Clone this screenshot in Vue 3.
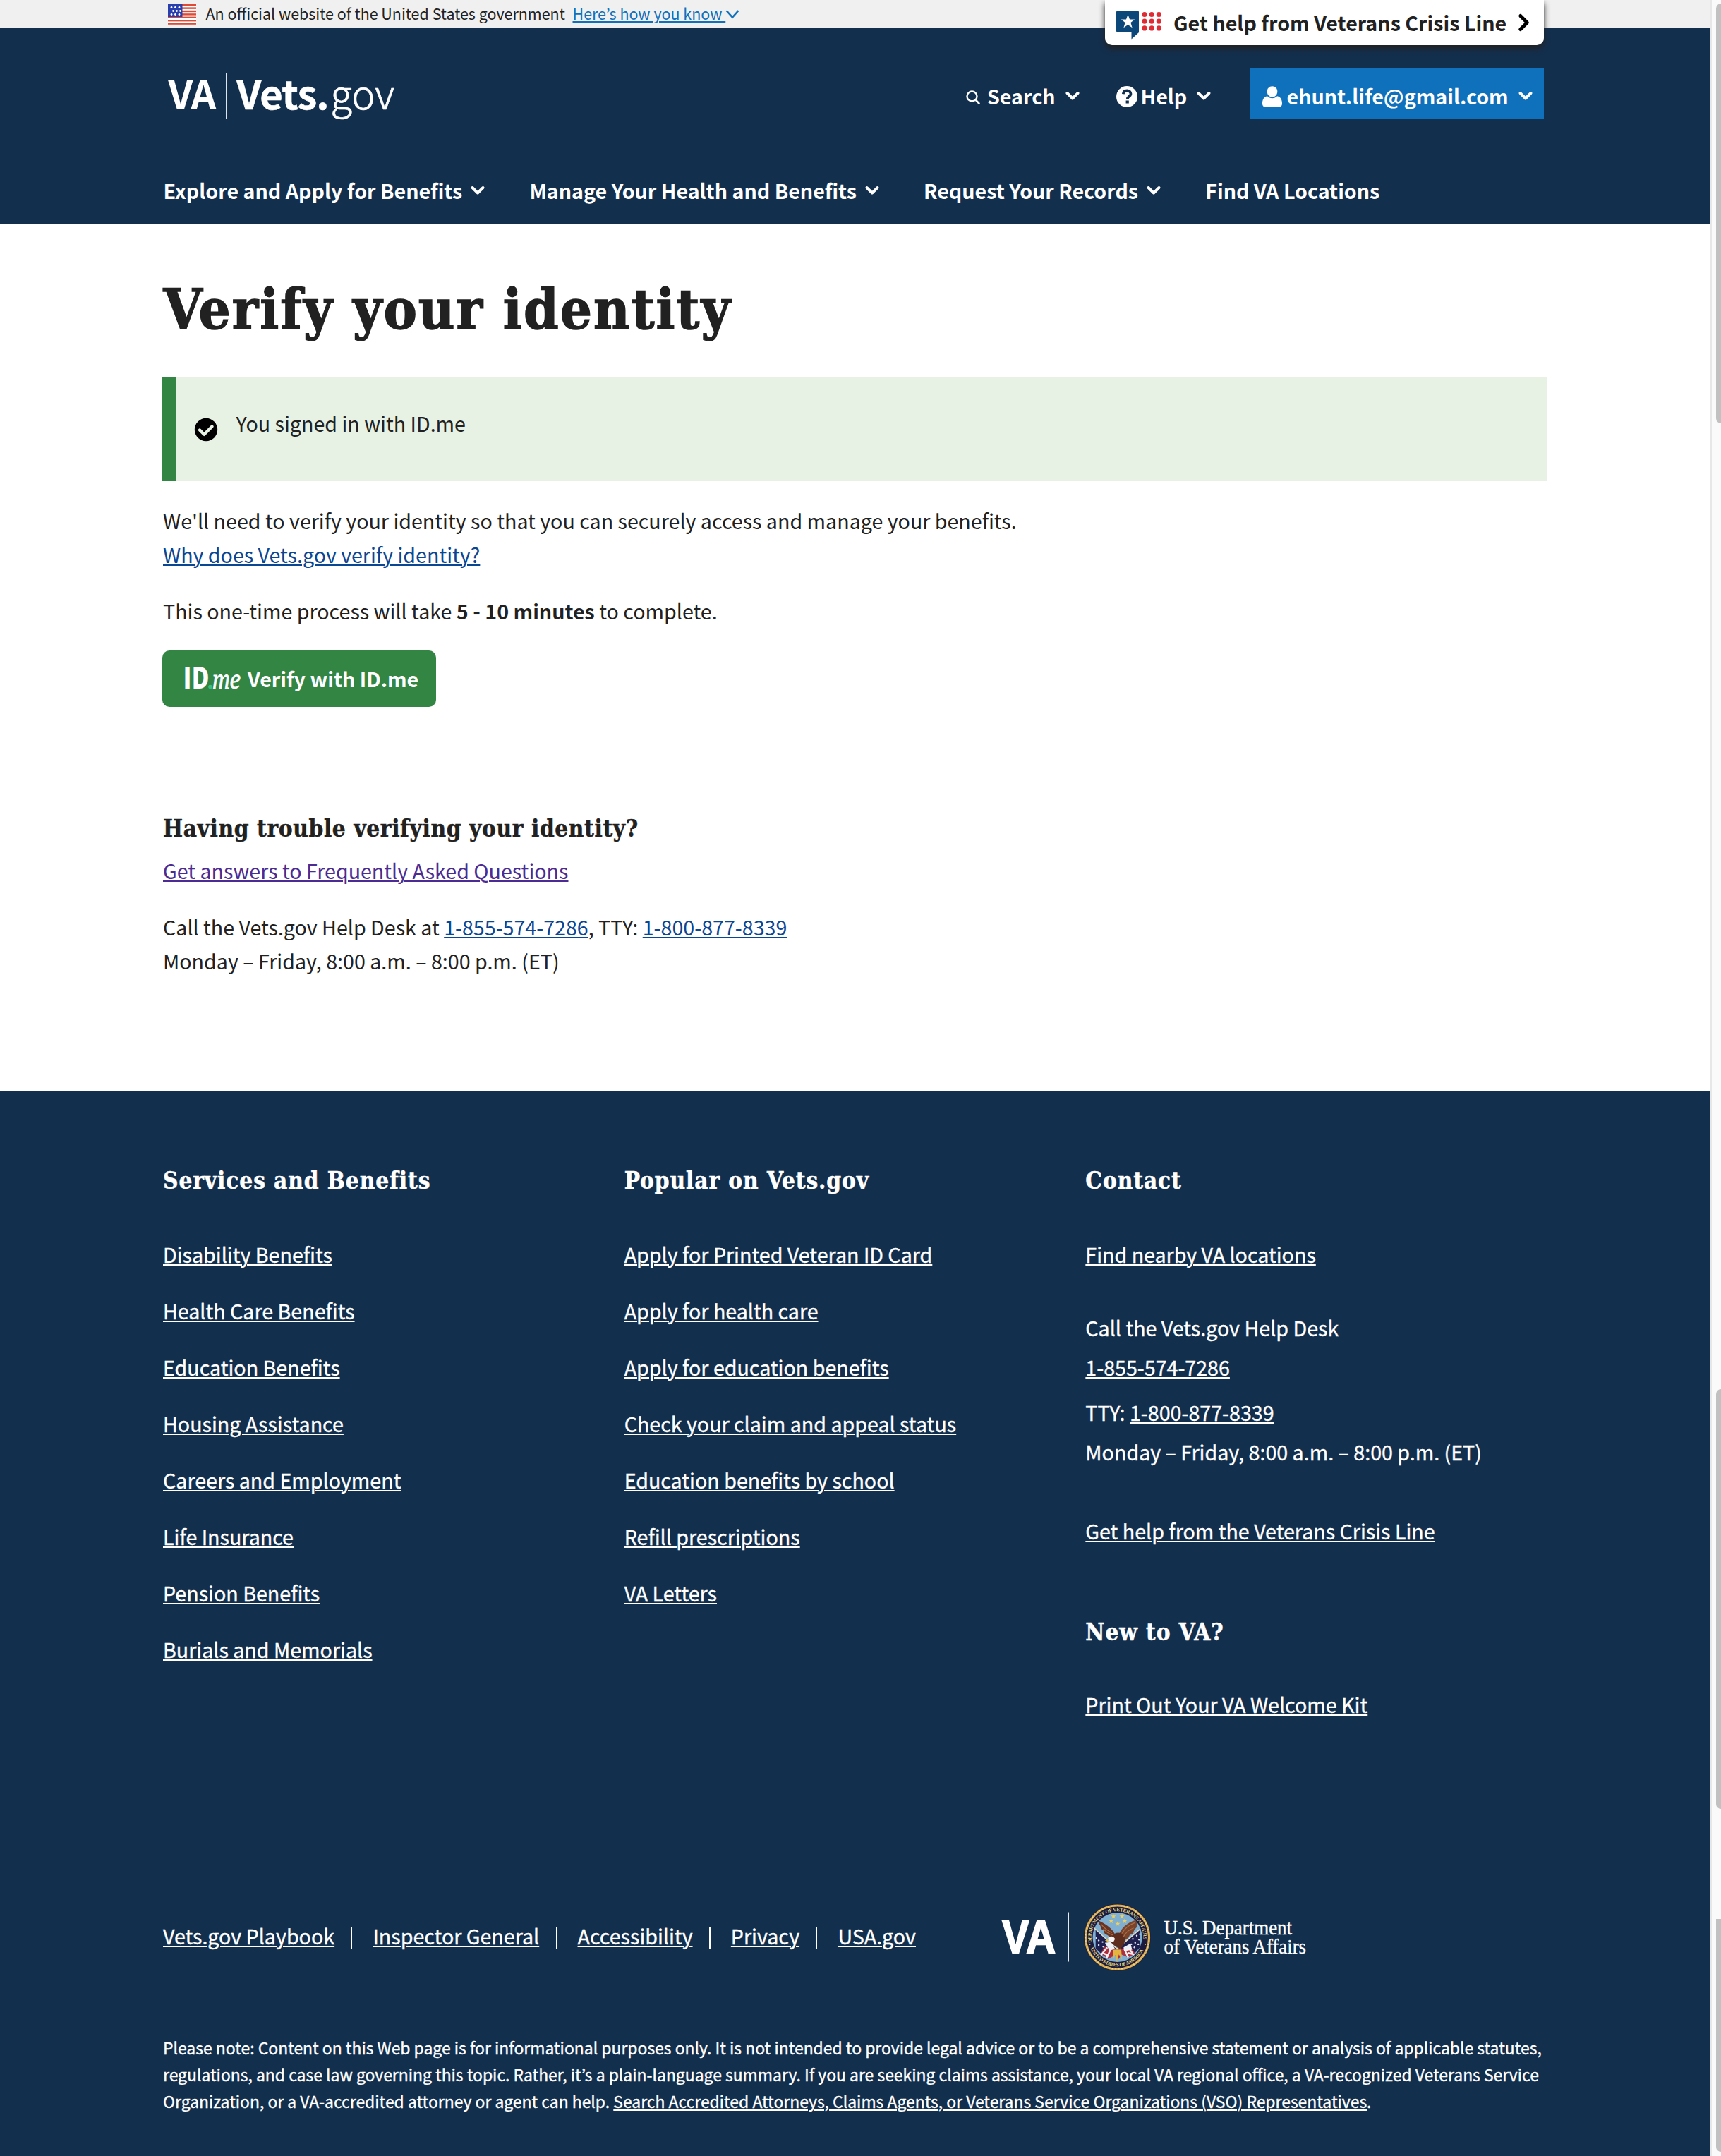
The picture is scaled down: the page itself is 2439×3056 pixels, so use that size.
<script setup>
const menu = [
  { label: 'Explore and Apply for Benefits', drop: true },
  { label: 'Manage Your Health and Benefits', drop: true },
  { label: 'Request Your Records', drop: true },
  { label: 'Find VA Locations', drop: false },
]
const services = [
  'Disability Benefits', 'Health Care Benefits', 'Education Benefits', 'Housing Assistance',
  'Careers and Employment', 'Life Insurance', 'Pension Benefits', 'Burials and Memorials',
]
const popular = [
  'Apply for Printed Veteran ID Card', 'Apply for health care', 'Apply for education benefits',
  'Check your claim and appeal status', 'Education benefits by school', 'Refill prescriptions', 'VA Letters',
]
const legal = ['Vets.gov Playbook', 'Inspector General', 'Accessibility', 'Privacy', 'USA.gov']
const dots = [0, 1, 2].flatMap((r) => [0, 1, 2].map((c) => ({ x: 40 + c * 10.2, y: 5.5 + r * 9.7 })))
const flagStars = [[5, 4.5], [10.5, 4.5], [16, 4.5], [7.5, 9.5], [12.5, 9.5], [17.5, 9.5], [5, 14.5], [10.5, 14.5], [16, 14.5]]
const sealStars = [[-6, -28], [5, -28], [-9, -22], [8.5, -22], [-0.5, -18.5]]
const speckles = [[20, 2], [25, -2], [28, 3], [23, 7], [18, 9], [27, 9], [15, 14], [22, 13], [29, -4], [-24, 4], [-19, 6], [-24, 10], [-18, 12], [-27, 1]]
</script>

<template>
  <div class="app">
    <div class="page">
      <div class="banner">
        <svg class="flag" width="40" height="29" viewBox="0 0 40 29">
          <rect width="40" height="29" fill="#fff" />
          <rect v-for="i in 7" :key="i" x="0" :y="(i - 1) * 4.4" width="40" height="2.4" fill="#dd4a35" />
          <rect width="20.5" height="18" fill="#2a3fae" />
          <circle v-for="(s, i) in flagStars" :key="'s' + i" :cx="s[0]" :cy="s[1]" r="1.4" fill="#fff" />
        </svg>
        <span class="official">An official website of the United States government</span>
        <a class="know">Here’s how you know&nbsp;</a>
        <svg class="know-chev" width="20" height="14" viewBox="0 0 20 14"><path d="M1.5 2l8.5 9.5L18.5 2" fill="none" stroke="#0f71bb" stroke-width="2.6" /></svg>
      </div>

      <div class="crisis">
        <svg width="66" height="42" viewBox="0 0 66 42">
          <path d="M2 0h28a2 2 0 0 1 2 2v29l-10.5 9.5V31H2a2 2 0 0 1-2-2V2a2 2 0 0 1 2-2z" fill="#0b4778" />
          <path d="M16.500 5.500l2.500 7h7.200l-5.800 4.500 2.200 7.300-6.100-4.400-6.100 4.400 2.200-7.300-5.800-4.500h7.200z" fill="#fff" />
          <circle v-for="(d, i) in dots" :key="i" :cx="d.x" :cy="d.y" r="3.6" fill="#df2b34" />
        </svg>
        <b>Get help from Veterans Crisis Line</b>
        <svg class="cr-chev" width="16" height="24" viewBox="0 0 16 24"><path d="M2.800 2.500l9.500 9.500-9.500 9.500" fill="none" stroke="#000" stroke-width="5" stroke-linecap="round" stroke-linejoin="round" /></svg>
      </div>

      <header>
        <div class="top">
          <div class="logo"><b class="va">VA</b><i class="bar"></i><b class="vets">Vets.</b><span>gov</span></div>
          <div class="tool search">
            <svg width="20" height="20" viewBox="0 0 20 20"><circle cx="8.500" cy="8.500" r="7" fill="none" stroke="#fff" stroke-width="2.400" /><path d="M13.500 13.500l5 5" stroke="#fff" stroke-width="2.600" stroke-linecap="round" /></svg>
            <b>Search</b>
            <svg class="chev" width="20" height="14" viewBox="0 0 20 14"><path d="M2.500 3l7.500 7.500L17.500 3" /></svg>
          </div>
          <div class="tool help">
            <svg width="30" height="30" viewBox="0 0 30 30"><circle cx="15" cy="15" r="15" fill="#fff" /><path d="M9.800 11.200C10.300 7.800 12.400 6.500 15.200 6.500c3 0 5.300 1.800 5.300 4.500 0 3.700-4.700 3.900-4.700 7.300" fill="none" stroke="#132f4e" stroke-width="3.800" /><rect x="13.600" y="20.500" width="4.200" height="4" fill="#132f4e" /></svg>
            <b>Help</b>
            <svg class="chev" width="20" height="14" viewBox="0 0 20 14"><path d="M2.500 3l7.500 7.500L17.500 3" /></svg>
          </div>
          <div class="tool user">
            <svg width="28" height="30" viewBox="0 0 28 30"><path d="M14 0.200c4.300 0 7.300 3.300 7.300 7.600S18.300 15.700 14 15.700 6.700 12.100 6.700 7.800 9.700 0.200 14 0.200z" fill="#fff" /><path d="M7 14.200c1.900 2 4.300 3 7 3s5.100-1 7-3c4.800 0.600 7 5 7 10.600 0 3.200-1.900 5-4.600 5H4.600C1.900 29.800 0 28 0 24.800c0-5.600 2.200-10 7-10.600z" fill="#fff" /></svg>
            <b>ehunt.life@gmail.com</b>
            <svg class="chev" width="20" height="14" viewBox="0 0 20 14"><path d="M2.500 3l7.500 7.500L17.500 3" /></svg>
          </div>
        </div>
        <nav>
          <div v-for="m in menu" :key="m.label" class="item">
            <b>{{ m.label }}</b>
            <svg v-if="m.drop" class="chev" width="20" height="14" viewBox="0 0 20 14"><path d="M2.500 3l7.500 7.500L17.500 3" /></svg>
          </div>
        </nav>
      </header>

      <main>
        <h1>Verify your identity</h1>
        <div class="alert">
          <svg width="32" height="32" viewBox="0 0 32 32"><circle cx="16" cy="16" r="16.200" fill="#000" /><path d="M7 16.500l6.300 6.300L24.500 11.500" fill="none" stroke="#e7f2e4" stroke-width="4.400" stroke-linecap="round" stroke-linejoin="round" /></svg>
          <span>You signed in with ID.me</span>
        </div>
        <p class="p1">We'll need to verify your identity so that you can securely access and manage your benefits.<br /><a>Why does Vets.gov verify identity?</a></p>
        <p class="p2">This one-time process will take <b>5 - 10 minutes</b> to complete.</p>
        <button>
          <svg width="84" height="36" viewBox="0 0 84 36">
            <text class="idm" x="-2.500" y="32" textLength="37" lengthAdjust="spacingAndGlyphs">ID</text>
            <circle cx="36" cy="29.500" r="2.800" fill="#35c17c" />
            <text class="me" x="39" y="32" textLength="40" lengthAdjust="spacingAndGlyphs">me</text>
          </svg>
          <b>Verify with ID.me</b>
        </button>
        <h3>Having trouble verifying your identity?</h3>
        <p class="faq"><a>Get answers to Frequently Asked Questions</a></p>
        <p class="p2">Call the Vets.gov Help Desk at <a>1-855-574-7286</a>, TTY: <a>1-800-877-8339</a><br />Monday – Friday, 8:00 a.m. – 8:00 p.m. (ET)</p>
      </main>

      <footer>
        <div class="cols">
          <section>
            <h3>Services and Benefits</h3>
            <ul><li v-for="s in services" :key="s"><a>{{ s }}</a></li></ul>
          </section>
          <section>
            <h3>Popular on Vets.gov</h3>
            <ul><li v-for="s in popular" :key="s"><a>{{ s }}</a></li></ul>
          </section>
          <section>
            <h3>Contact</h3>
            <ul><li><a>Find nearby VA locations</a></li></ul>
            <p class="call">Call the Vets.gov Help Desk<br /><a>1-855-574-7286</a></p>
            <p class="tty">TTY: <a>1-800-877-8339</a><br />Monday – Friday, 8:00 a.m. – 8:00 p.m. (ET)</p>
            <p class="gethelp"><a>Get help from the Veterans Crisis Line</a></p>
            <h3 class="new">New to VA?</h3>
            <p class="kit"><a>Print Out Your VA Welcome Kit</a></p>
          </section>
        </div>

        <div class="bottom">
          <div class="legal">
            <template v-for="(l, i) in legal" :key="l"><i v-if="i" class="sep"></i><a>{{ l }}</a></template>
          </div>
          <svg class="dept" width="416" height="100" viewBox="0 0 416 100">
            <text class="dva" x="0" y="72" textLength="76" lengthAdjust="spacingAndGlyphs">VA</text>
            <rect x="93.500" y="14.500" width="1.400" height="70" fill="#fff" />
            <g transform="translate(163.500 50)">
              <defs>
                <path id="arcTop" d="M-36 7.500A36.800 36.800 0 1 1 36 7.500" />
                <path id="arcLow" d="M-38.500 14.500A41.100 41.100 0 0 0 38.500 14.500" />
                <clipPath id="disc"><circle r="31.800" /></clipPath>
              </defs>
              <circle r="47.500" fill="#20203f" />
              <circle r="45" fill="none" stroke="#d9ab4e" stroke-width="3.200" />
              <circle r="45" fill="none" stroke="#f4dc8c" stroke-width="1.200" stroke-dasharray="2 2.500" />
              <circle r="43" fill="#1b1b40" />
              <g transform="scale(1.1)">
                <circle r="31.800" fill="#7fb0d2" />
                <g clip-path="url(#disc)">
                  <path d="M-28-10L-2 14l-6 10-11-1-9-9z" fill="#1e2050" />
                  <path d="M29-10L4 12l6 12 11-2 8-9z" fill="#1e2050" />
                  <path d="M-30-12L2 17M31-12L-2 16" stroke="#e4dcc4" stroke-width="1.400" />
                  <circle v-for="(s, i) in speckles" :key="i" :cx="s[0]" :cy="s[1]" r="1.100" fill="#dfe6f2" />
                  <path d="M-17 12l17 4 17-4 6 9-9 5-9-4-3 6-5-5-9 5-9-7z" fill="#b02f3e" />
                  <path d="M-13 13l-8 10M-8 14l-6 13M9 15l5 11M15 14l6 9M-19 20l8 4M13 20l8 2" stroke="#f6efef" stroke-width="2.200" />
                  <path d="M-16 7l8-1 5 9-7 2zM8 13l9-5 2 8-10 2z" fill="#eef1f6" />
                  <path d="M-5 16l-1 14 4-8 1 10 3-10 4 7-1-13z" fill="#e3b540" />
                  <path d="M-25-22l2 6 1 1 2 5 2 1 2 5 3 1 4 3 8 1C-4-8-9-14-25-22z" fill="#6b3420" />
                  <path d="M27-23C17-21 6-15 2-3l5 8 7-4 2-4 4-2 2-5 3-3z" fill="#7b4329" />
                  <path d="M-7-1C-3-8 6-7 9-1c2 6 0 12-6 16-5-3-9-6-13-10z" fill="#5d2e1e" />
                  <path d="M-21-17c4 5 7 8 14 11M-18-11c3 4 6 6 12 8M23-19C15-16 9-11 6-5M21-12C15-10 11-6 8-1" stroke="#a8704a" stroke-width="1.100" fill="none" />
                  <path d="M-12 1c2-3 7-3 9 1l-2 4-6-1z" fill="#f7f7f7" />
                  <path d="M-12 2l-4 2 4 2z" fill="#eac04f" />
                </g>
                <path v-for="(s, i) in sealStars" :key="'t' + i" :transform="`translate(${s[0] + 1} ${s[1] + 1})`" d="M0-3.200l.9 2.200h2.400L1.400.4l.7 2.400L0 1.400l-2.100 1.400.7-2.400L-3.300-1h2.400z" fill="#f0cf5c" />
              </g>
              <text class="ring"><textPath href="#arcTop" textLength="126">DEPARTMENT OF VETERANS AFFAIRS</textPath></text>
              <text class="ring"><textPath href="#arcLow" startOffset="1" textLength="94">UNITED STATES OF AMERICA</textPath></text>
              <circle cx="-39" cy="10" r="1" fill="#e5d37a" />
              <circle cx="39.500" cy="10" r="1" fill="#e5d37a" />
            </g>
            <text class="dept-t" x="229.500" y="45.500" textLength="181.500" lengthAdjust="spacingAndGlyphs">U.S. Department</text>
            <text class="dept-t" x="229.500" y="72.500" textLength="201.500" lengthAdjust="spacingAndGlyphs">of Veterans Affairs</text>
          </svg>
        </div>

        <p class="note">Please note: Content on this Web page is for informational purposes only. It is not intended to provide legal advice or to be a comprehensive statement or analysis of applicable statutes, regulations, and case law governing this topic. Rather, it’s a plain-language summary. If you are seeking claims assistance, your local VA regional office, a VA-recognized Veterans Service Organization, or a VA-accredited attorney or agent can help. <a>Search Accredited Attorneys, Claims Agents, or Veterans Service Organizations (VSO) Representatives</a>.</p>
      </footer>
    </div>

    <div class="gutter">
      <div class="thumb t1"></div>
      <div class="thumb t2"></div>
      <div class="thumb t3"></div>
    </div>
  </div>
</template>

<style>
body { margin: 0; background: #fff; }
</style>

<style scoped>
.app {
  display: flex;
  width: 2439px;
  height: 3056px;
  overflow: hidden;
  color: #212121;
  font-family: "Noto Sans CJK KR", "Noto Sans CJK SC", sans-serif;
  font-size: 28.63px;
  line-height: 48px;
}
b { font-weight: 700; }
a { text-decoration: underline; text-decoration-thickness: 2px; text-underline-offset: 2px; white-space: nowrap; }
p, h1, h3, ul { margin: 0; padding: 0; }
svg { display: block; flex: none; overflow: visible; }
.page { position: relative; width: 2424px; flex: none; }

.banner { display: flex; height: 40px; background: #f0f0f0; padding-left: 238px; box-sizing: border-box; font-size: 21.48px; line-height: 37px; white-space: nowrap; }
.flag { margin-top: 6px; }
.official { margin-left: 13.5px; width: 520px; }
.know { color: #0f71bb; width: 216px; }
.know-chev { margin-top: 13px; }

.crisis { position: absolute; top: 0; right: 236px; width: 622px; height: 64px; box-sizing: border-box; padding-left: 16px; display: flex; background: #fff; border-radius: 0 0 10px 10px; box-shadow: 0 5px 8px #222; clip-path: inset(0 -20px -20px -20px); line-height: 64px; white-space: nowrap; }
.crisis > svg:first-child { margin-top: 15px; }
.crisis b { margin-left: 15px; width: 489px; font-size: 28.65px; }
.cr-chev { margin-top: 20px; }

header { height: 278px; background: #132f4e; color: #fff; padding: 56px 236px 0 231.5px; box-sizing: border-box; white-space: nowrap; }
.top { display: flex; height: 72px; }
.logo { display: flex; flex: 1; padding-left: 7px; font-size: 56px; line-height: 69px; }
.logo .va { width: 81px; letter-spacing: -1.5px; }
.logo .bar { width: 2px; height: 64px; margin: 8px 14px 0 0; background: #dfe4ea; }
.logo .vets { letter-spacing: -0.8px; width: 133px; -webkit-text-stroke: 0.6px #fff; }
.logo span { font-weight: 300; -webkit-text-stroke: 0.7px #fff; }
.tool { display: flex; box-sizing: border-box; height: 72px; padding-top: 7px; line-height: 65px; }
.chev { margin-left: auto; fill: none; stroke: #fff; stroke-width: 4; stroke-linecap: round; stroke-linejoin: round; }
.tool .chev { margin-top: 26px; }
.search { width: 161px; margin-right: 52px; }
.search > svg:first-child { margin-top: 25px; margin-right: 10px; }
.help { width: 134px; margin-right: 56px; }
.help > svg:first-child { margin-top: 19px; margin-right: 4.5px; }
.user { width: 416px; padding-left: 17px; padding-right: 16px; background: #0f71bb; }
.user > svg:first-child { margin-top: 19px; margin-right: 6.5px; }
nav { display: flex; gap: 63.2px; margin-top: 81.5px; line-height: 40px; }
.item { display: flex; gap: 12px; }
.item .chev { margin: 13px 0 0; }

main { height: 1228px; padding: 80.7px 232px 0 230px; box-sizing: border-box; }
h1 { font: 700 79px/80px "DejaVu Serif Condensed", "DejaVu Serif", serif; letter-spacing: 2.05px; -webkit-text-stroke: 1.4px #212121; padding-left: 1.5px; }
h3 { font: 700 33px/48px "DejaVu Serif Condensed", "DejaVu Serif", serif; letter-spacing: 0.66px; padding-left: 1px; -webkit-text-stroke: 0.5px currentColor; }
main a { color: #0b4693; }
main p { padding-left: 1px; }
.alert { display: flex; height: 148px; margin-top: 55.3px; box-sizing: border-box; border-left: 20px solid #338544; background: #e7f2e4; padding-left: 26px; }
.alert svg { margin-top: 59px; }
.alert span { margin: 42px 0 0 26.500px; }
.p1 { margin-top: 32.4px; }
.p2 { margin-top: 32px; }
button { display: flex; width: 388px; height: 80px; margin-top: 31.6px; padding: 0 0 0 32px; border: 0; border-radius: 10px; background: #338544; color: #fff; font-family: inherit; line-height: 79px; white-space: nowrap; }
button b { font-size: 28.63px; }
button svg { margin-top: 22px; margin-right: 5px; }
.idm { font: 900 41px "Noto Sans CJK KR", sans-serif; fill: #fff; }
.me { font: italic 400 41px "Liberation Serif", serif; fill: #fff; stroke: #fff; stroke-width: 0.8; }
main h3 { margin-top: 148.6px; }
.faq { margin-top: 11.500px; }
main .faq a { color: #4c2c92; }

footer { height: 1510px; background: #132f4e; color: #fff; padding: 103.9px 232px 0 231px; box-sizing: border-box; -webkit-text-stroke: 0.35px #fff; }
footer h3 { letter-spacing: 0.95px; padding: 0; -webkit-text-stroke: 0.5px #fff; }
.cols { display: flex; height: 1045.9px; }
section { width: 654px; white-space: nowrap; }
ul { list-style: none; margin-top: 56.5px; display: flex; flex-direction: column; gap: 32px; }
.call, .tty { line-height: 56px; }
.call { margin-top: 51.5px; }
.tty { margin-top: 8px; }
.gethelp { margin-top: 60px; }
.new { margin-top: 96.6px; }
.kit { margin-top: 53.500px; }
.bottom { display: flex; height: 100px; }
.legal { display: flex; width: 1189px; padding-top: 24.700px; white-space: nowrap; }
.sep { width: 2px; height: 32px; margin: 11px 29px 0 23.300px; background: #fff; }
.dept { -webkit-text-stroke: 0; }
.dva { font: 700 66px "Liberation Sans", sans-serif; fill: #fff; stroke: #fff; stroke-width: 2; }
.dept-t { font: 400 29px "Liberation Serif", serif; fill: #fff; stroke: #fff; stroke-width: 0.4; }
.ring { font: 700 7px "Liberation Serif", serif; fill: #e5d37a; }
.note { margin-top: 87.200px; font-size: 22.92px; line-height: 38px; }

.gutter { width: 15px; flex: none; box-sizing: border-box; border-left: 2px solid #e7e7e7; background: #fafafa; padding-left: 6px; }
.thumb { background: #c1c1c1; border-radius: 8px 0 0 8px; }
.t1 { margin-top: 5px; height: 595px; }
.t2 { margin-top: 1369px; height: 595px; }
.t3 { margin-top: 156px; height: 330px; border-radius: 0 0 0 8px; }
</style>
